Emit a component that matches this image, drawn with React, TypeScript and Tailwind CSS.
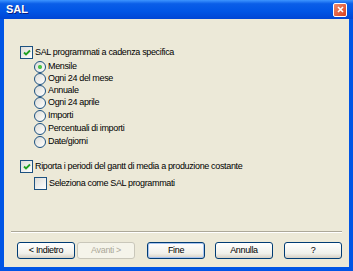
import { ReactNode } from "react";

const font = "font-['Liberation_Sans',Arial,sans-serif]";

const CheckBox = ({ checked }: { checked?: boolean }) => (
  <span className="flex h-[13px] w-[13px] shrink-0 items-center justify-center border border-[#1c5180] bg-[linear-gradient(135deg,#dcdcd7,#ffffff)]">
    {checked && (
      <svg width="8" height="8" viewBox="0 0 8 8">
        <path d="M1 3.5 L3 5.5 L7 1.5" stroke="#21a121" strokeWidth="1.8" fill="none" />
      </svg>
    )}
  </span>
);

const Radio = ({ checked }: { checked?: boolean }) => (
  <span className="flex h-[12px] w-[12px] shrink-0 items-center justify-center rounded-full border border-[#1c5180] bg-[linear-gradient(135deg,#dcdcd7,#ffffff)]">
    {checked && (
      <span className="h-[4px] w-[4px] rounded-full bg-[radial-gradient(circle,#55d551,#21a121)]" />
    )}
  </span>
);

const Option = ({
  control,
  label,
  className,
}: {
  control: ReactNode;
  label: string;
  className: string;
}) => (
  <div className={`flex items-center gap-[2px] ${className}`}>
    {control}
    <span className="whitespace-nowrap">{label}</span>
  </div>
);

const Button = ({
  children,
  disabled,
  def,
  className = "",
}: {
  children: ReactNode;
  disabled?: boolean;
  def?: boolean;
  className?: string;
}) => (
  <button
    className={`flex h-[17px] w-[58px] items-center justify-center rounded-[3px] border ${
      disabled
        ? "border-[#c9c7ba] bg-[#f5f4ea] text-[#aca899]"
        : "border-[#003c74] bg-[linear-gradient(to_bottom,#ffffff,#f0f0ea_70%,#d6d0c5)] text-black"
    } ${def ? "shadow-[inset_0_0_0_1px_#a8c4f0]" : ""} ${className}`}
  >
    {children}
  </button>
);

const radios = [
  "Mensile",
  "Ogni 24 del mese",
  "Annuale",
  "Ogni 24 aprile",
  "Importi",
  "Percentuali di importi",
  "Date/giorni",
];

const App = () => {
  return (
    <div className={`flex h-[271px] w-[353px] flex-col bg-[#0055e5] ${font}`}>
      {/* TITLE BAR */}
      <div className="flex h-[19px] shrink-0 items-center justify-between bg-[linear-gradient(to_bottom,#3d95ff,#0a5ee8_20%,#0055e5_60%,#0046d5)] pl-[6px] pr-[6px]">
        <span className="text-[11px] font-bold text-white [text-shadow:1px_1px_#0a1e80]">
          SAL
        </span>
        <span className="flex h-[14px] w-[14px] items-center justify-center rounded-[2px] border border-white bg-[linear-gradient(135deg,#f08a6c,#d9411e)]">
          <svg width="7" height="7" viewBox="0 0 7 7">
            <path d="M1 1 L6 6 M6 1 L1 6" stroke="#fff" strokeWidth="1.6" />
          </svg>
        </span>
      </div>

      {/* BODY */}
      <div className="mx-[4px] mb-[4px] flex flex-1 flex-col bg-[#ece9d8] text-[9px] tracking-[-0.35px] text-black">
        <Option
          className="ml-[16px] mt-[27px] h-[13px]"
          control={<CheckBox checked />}
          label="SAL programmati a cadenza specifica"
        />
        <div className="ml-[30px] mt-[2px] flex flex-col">
          {radios.map((label, idx) => (
            <Option
              key={label}
              className={idx < 4 ? "h-[12px]" : "h-[13px]"}
              control={<Radio checked={idx === 0} />}
              label={label}
            />
          ))}
        </div>
        <Option
          className="ml-[16px] mt-[12px] h-[13px]"
          control={<CheckBox checked />}
          label="Riporta i periodi del gantt di media a produzione costante"
        />
        <Option
          className="ml-[30px] mt-[4px] h-[13px]"
          control={<CheckBox />}
          label="Seleziona come SAL programmati"
        />

        <div className="mx-[7px] mt-[41px] h-[2px] border-t border-b border-t-[#aca899] border-b-white" />

        <div className="ml-[13px] mt-[9px] flex">
          <Button>&lt; Indietro</Button>
          <Button disabled className="ml-[2px]">
            Avanti &gt;
          </Button>
          <Button def className="ml-[12px]">
            Fine
          </Button>
          <Button className="ml-[10px]">Annulla</Button>
          <Button className="ml-[11px]">?</Button>
        </div>
      </div>
    </div>
  );
};

export default App;
